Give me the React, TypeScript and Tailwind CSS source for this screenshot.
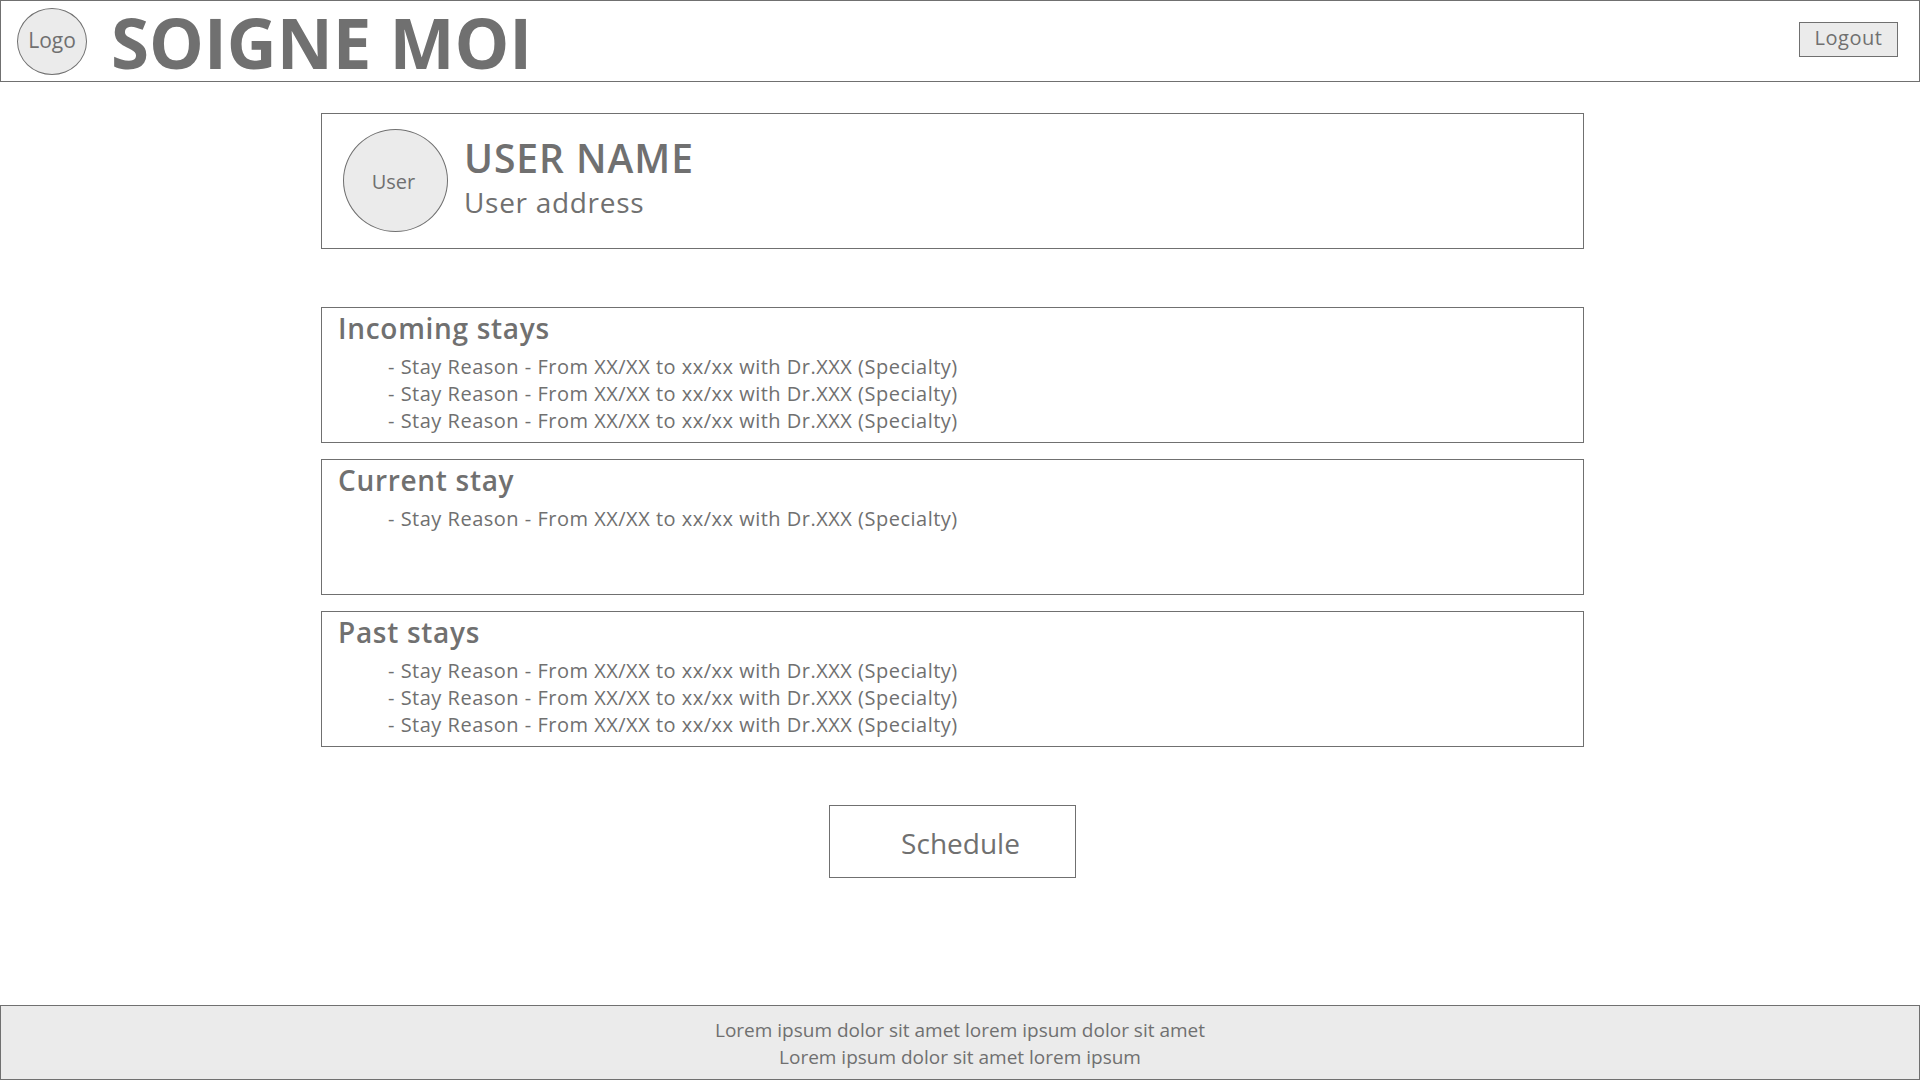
const line = "- Stay Reason - From XX/XX to xx/xx with Dr.XXX (Specialty)";

function StayCard({ title, stays }: { title: string; stays: string[] }) {
  return (
    <section className="min-h-34 border border-[#707070] bg-white px-4">
      <h2 className="pt-0.5 text-[28px] leading-9 font-semibold tracking-wide">{title}</h2>
      <ul className="mt-[7px] pl-[50px] text-[20px] leading-[27px] tracking-wide">
        {stays.map((stay, i) => (
          <li key={i}>{stay}</li>
        ))}
      </ul>
    </section>
  );
}

export default function App() {
  return (
    <div className="flex min-h-screen flex-col bg-white font-['Open_Sans',sans-serif] text-[#707070]">
      <header className="flex min-h-[82px] items-center border border-[#707070] pr-[21px] pl-4">
        <div className="flex h-[67px] w-[70px] items-center justify-center rounded-[50%] border border-[#707070] bg-[#ebebeb] text-[21px]">
          Logo
        </div>
        <h1 className="ml-6 pt-0.5 text-[69px] leading-[78px] font-bold">SOIGNE MOI</h1>
        <button className="mb-1 ml-auto h-[35px] w-[99px] border border-[#707070] bg-[#ebebeb] pb-0.5 text-xl leading-7 tracking-wide">
          Logout
        </button>
      </header>

      <main className="flex flex-1 flex-col pt-[31px] pr-[336px] pl-[321px]">
        <section className="flex min-h-34 items-center gap-4 border border-[#707070] px-[21px] pb-0.5">
          <div className="flex h-[103px] w-[105px] items-center justify-center rounded-[50%] border border-[#707070] bg-[#ebebeb] pt-1 pr-1 text-xl">
            User
          </div>
          <div className="pb-1">
            <h2 className="text-[39px] leading-12 font-semibold tracking-wide">USER NAME</h2>
            <p className="text-[28px] leading-10 tracking-wide">User address</p>
          </div>
        </section>
        <div className="mt-[58px] flex flex-col gap-4">
          <StayCard title="Incoming stays" stays={[line, line, line]} />
          <StayCard title="Current stay" stays={[line]} />
          <StayCard title="Past stays" stays={[line, line, line]} />
        </div>
        <button className="mx-auto mt-[58px] h-[73px] w-[247px] border border-[#707070] pt-0.5 pl-4 text-[28px]">Schedule</button>
      </main>

      <footer className="border border-[#707070] bg-[#ebebeb] pt-[11px] pb-2 text-center text-[19px] leading-[27px]">
        <p>Lorem ipsum dolor sit amet lorem ipsum dolor sit amet</p>
        <p>Lorem ipsum dolor sit amet lorem ipsum</p>
      </footer>
    </div>
  );
}
